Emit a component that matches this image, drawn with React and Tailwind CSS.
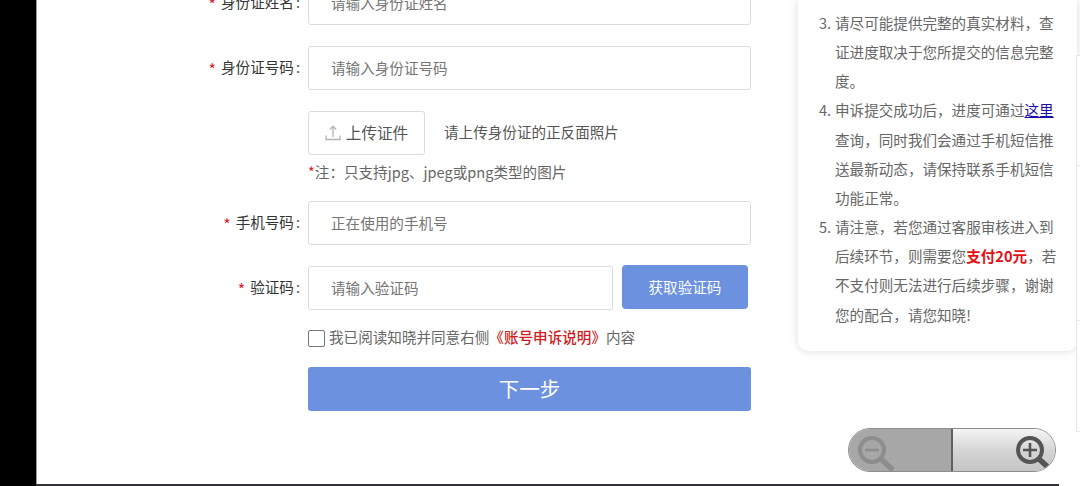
import clsx from "clsx"

const FONT = "font-['Noto_Sans_CJK_SC','Noto_Sans',sans-serif]"

const notices = [
  {
    id: 3,
    lines: ["请尽可能提供完整的真实材料，查", "证进度取决于您所提交的信息完整", "度。"],
  },
  {
    id: 4,
    lines: [
      <>
        申诉提交成功后，进度可通过
        <a className="text-[#1a0dab] underline decoration-1 underline-offset-1">这里</a>
      </>,
      "查询，同时我们会通过手机短信推",
      "送最新动态，请保持联系手机短信",
      "功能正常。",
    ],
  },
  {
    id: 5,
    lines: [
      "请注意，若您通过客服审核进入到",
      <>
        后续环节，则需要您<b className="font-bold text-[#e60f14]">支付20元</b>，若
      </>,
      "不支付则无法进行后续步骤，谢谢",
      "您的配合，请您知晓!",
    ],
  },
]

function Row({ label, className, children }) {
  return (
    <div className={clsx("flex h-11 items-center", className)}>
      <div className="flex w-[263px] shrink-0 items-center justify-end pb-0.5 text-[#333]">
        <span className="mr-[5px] pt-[5px] text-[16px] leading-none text-[#d9232e]">*</span>
        {label}
        <span className="ml-0.5 text-[#555]">:</span>
      </div>
      <div className="ml-2 flex flex-1">{children}</div>
    </div>
  )
}

function Field({ placeholder, className }) {
  return (
    <input
      className={clsx(
        "h-11 rounded-[3px] border border-[#dcdcdc] bg-white px-[22px] pb-0.5 placeholder:text-[#757575]",
        className || "w-[443px]",
      )}
      placeholder={placeholder}
    />
  )
}

function UploadIcon() {
  return (
    <svg className="h-4 w-4" viewBox="0 0 16 16" fill="none" stroke="#b3b3b3" strokeWidth="1.3">
      <path d="M1 10.5v4h14v-4M8 12V1.5M4.8 4.5 8 1.3l3.2 3.2" />
    </svg>
  )
}

function Magnifier({ plus, color }) {
  return (
    <svg className="h-[35px] w-[38px]" viewBox="0 0 38 35" fill="none" stroke={color}>
      <circle cx="14" cy="14" r="12" strokeWidth="4" />
      <path d="m23 23 12 11" strokeWidth="5.5" />
      <path d={plus ? "M7 14h14M14 7v14" : "M7 14h14"} strokeWidth="2.6" />
    </svg>
  )
}

function ZoomControl() {
  return (
    <div className="absolute left-[848px] top-[428px] flex h-11 w-[208px] overflow-hidden rounded-full border border-[#8d8d8d]">
      <div className="w-[104px] border-r-2 border-[#606060] bg-[#a7a7a7] pl-[9px] pt-[7px]">
        <Magnifier color="#8d8d8d" />
      </div>
      <div className="flex-1 bg-linear-to-b from-[#f5f5f5] via-[#d6d6d6] to-[#c4c4c4] pl-[63px] pt-[7px]">
        <Magnifier plus color="#555" />
      </div>
    </div>
  )
}

function AppealForm() {
  return (
    <div className="-mt-[19px] w-[761px] shrink-0">
      <Row label="身份证姓名">
        <Field placeholder="请输入身份证姓名" />
      </Row>
      <Row label="身份证号码" className="mt-[21px]">
        <Field placeholder="请输入身份证号码" />
      </Row>
      <div className="ml-[271px] mt-[21px] flex h-11 items-center">
        <button className="flex h-11 w-[117px] items-center justify-center gap-[5px] rounded-[3px] border border-[#dcdcdc] text-[15.6px] text-[#555]">
          <UploadIcon />
          <span className="pb-px">上传证件</span>
        </button>
        <span className="ml-[19px] pb-0.5 text-[#555]">请上传身份证的正反面照片</span>
      </div>
      <p className="ml-[271px] mt-[3px] h-[43px] leading-[27px]">
        <span className="text-[#d9232e]">*</span>注：只支持jpg、jpeg或png类型的图片
      </p>
      <Row label="手机号码">
        <Field placeholder="正在使用的手机号" />
      </Row>
      <Row label="验证码" className="mt-[21px]">
        <Field placeholder="请输入验证码" className="w-[305px]" />
        <button className="-mt-px ml-[9px] h-11 w-[126px] rounded-[4px] bg-[#6b91df] text-white">获取验证码</button>
      </Row>
      <label className="ml-[271px] mt-[17px] flex h-[22px] items-center">
        <input type="checkbox" className="mr-1 h-[17px] w-[17px] appearance-none rounded-[2px] border border-[#767676]" />
        <span className="pb-0.5">
          我已阅读知晓并同意右侧<span className="font-medium text-[#cf1d22]">《账号申诉说明》</span>内容
        </span>
      </label>
      <button className="ml-[271px] mt-[18px] block h-11 w-[443px] rounded-[3px] bg-[#6b91df] pb-0.5 text-[20.5px] text-white">
        下一步
      </button>
    </div>
  )
}

function Notice() {
  return (
    <aside className="h-[351px] w-[279px] shrink-0 overflow-hidden rounded-b-[10px] bg-white pl-[21px] pt-2 shadow-[0_0_10px_rgba(0,0,0,0.14)]">
      {notices.map((notice) => (
        <div key={notice.id} className="flex leading-[29.15px]">
          <span className="w-4 shrink-0 whitespace-nowrap">{notice.id}.</span>
          <div className="whitespace-nowrap">
            {notice.lines.map((line, i) => (
              <div key={i}>{line}</div>
            ))}
          </div>
        </div>
      ))}
    </aside>
  )
}

export default function App() {
  return (
    <div className={clsx("relative flex h-[486px] w-[1080px] overflow-hidden bg-white text-[14.58px] text-[#666]", FONT)}>
      <div className="w-[37px] shrink-0 border-r border-[#999] bg-black" />
      <div className="flex w-[1040px] shrink-0 flex-col justify-between">
        <div className="flex items-start">
          <AppealForm />
          <Notice />
        </div>
        <div className="-ml-px h-0.5 w-[1023px] bg-[#343236]" />
      </div>
      {/* edge of the floating service bar */}
      <div className="relative -ml-px mt-[55px] flex h-[377px] w-1 shrink-0 flex-col border border-r-0 border-[#e8e8e8] bg-white">
        <div className="h-[110px] border-b border-[#e8e8e8]" />
        <div className="h-[155px] border-b border-[#e8e8e8]" />
      </div>
      <ZoomControl />
    </div>
  )
}
